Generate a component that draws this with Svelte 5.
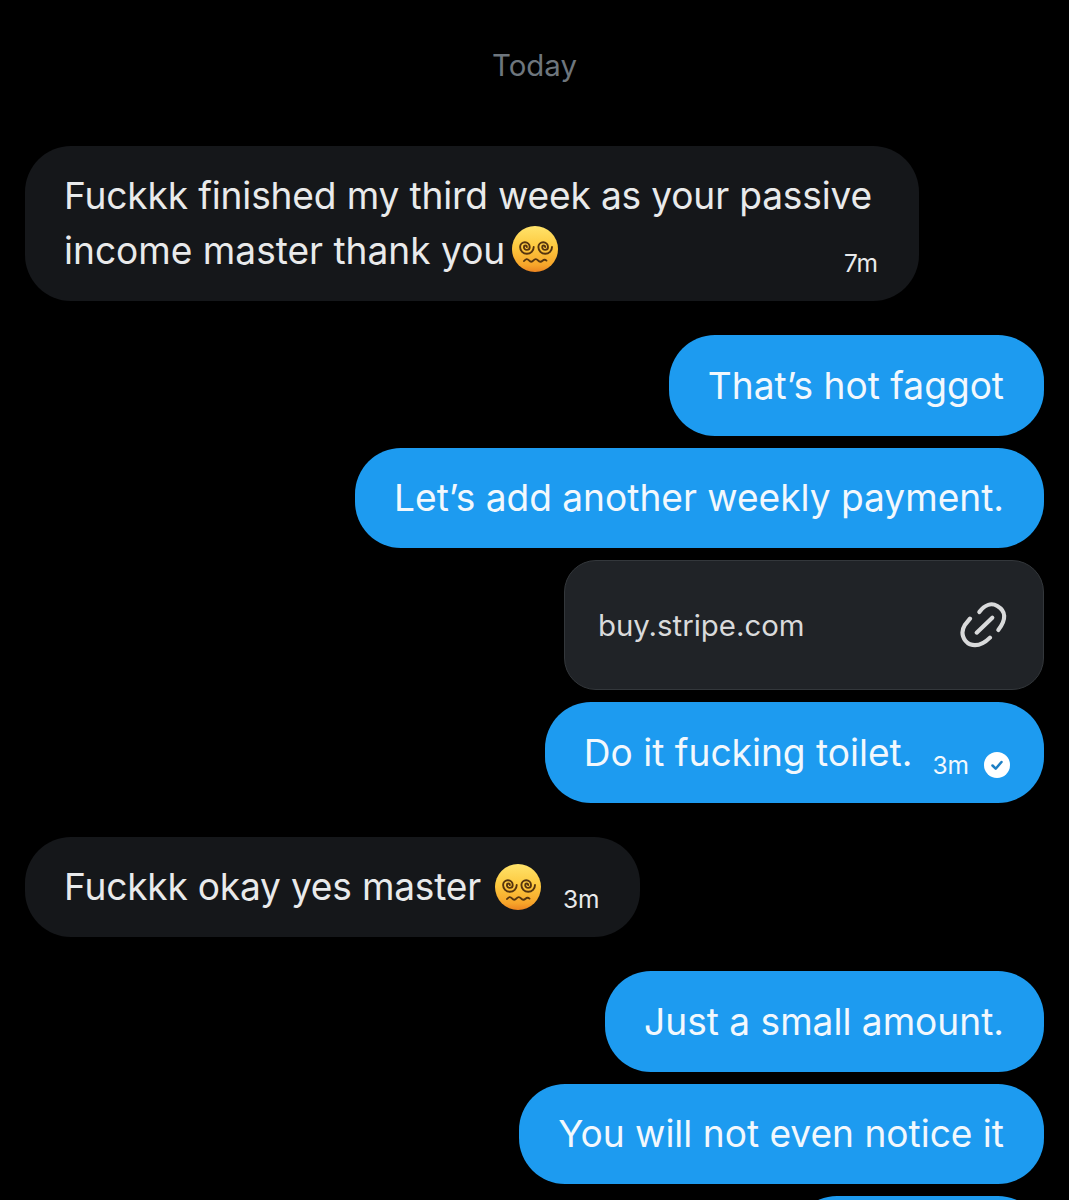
<script>
  const emojiLabel = 'face with spiral eyes';
</script>

{#snippet dizzy(cls)}
  <svg class={cls} viewBox="0 0 46 46" role="img" aria-label={emojiLabel}>
    <defs>
      <linearGradient id="face-{cls}" x1="0" y1="0" x2="0" y2="1">
        <stop offset="0%" stop-color="#ffe36b" />
        <stop offset="45%" stop-color="#fdc93f" />
        <stop offset="85%" stop-color="#f7a52a" />
        <stop offset="100%" stop-color="#ec8420" />
      </linearGradient>
    </defs>
    <circle cx="23" cy="23" r="23" fill="url(#face-{cls})" />
    <g fill="none" stroke="#55340f" stroke-width="1.900" stroke-linecap="round">
      <path d="M14.900 21A1.500 1.500 0 0 0 11.900 21A2.900 2.900 0 0 0 17.700 21A4.800 4.800 0 0 0 8.100 21A6.800 6.800 0 0 0 21.700 21" />
      <path d="M33.200 21A1.500 1.500 0 0 0 30.200 21A2.900 2.900 0 0 0 36 21A4.800 4.800 0 0 0 26.400 21A6.800 6.800 0 0 0 40 21" />
      <path d="M12 35c2-2.400 3.400-2.400 5-.6 1.500 1.700 3 1.700 4.500 0 1.500-1.700 3-1.700 4.500 0 1.600 1.800 3 1.800 4.500.4 1.300-1.200 2.500-1.500 4-.2" />
    </g>
  </svg>
{/snippet}

<main class="chat">
  <div class="day">Today</div>

  <section class="group">
    <div class="bubble in wide">
      <div class="line first">Fuckkk finished my third week as your passive</div>
      <div class="line spread">
        <span>income master thank you{@render dizzy('inline-a')}</span>
        <span class="time">7m</span>
      </div>
    </div>
  </section>

  <section class="group">
    <div class="bubble out">That’s hot faggot</div>
    <div class="bubble out">Let’s add another weekly payment.</div>
    <div class="link">
      <span>buy.stripe.com</span>
      <svg viewBox="90 35 148 142" fill="none" stroke="#d9dadb" stroke-width="12.500" stroke-linecap="round">
        <path d="M148 68C165 45 185 40 202 50C228 65 230 90 205 122" />
        <path d="M120 88L104 108C90 130 100 155 120 165C140 172 160 165 180 145" />
        <path d="M140 130L187 85" />
      </svg>
    </div>
    <div class="bubble out row sent">
      <span>Do it fucking toilet.</span>
      <span class="time">3m</span>
      <svg class="check" viewBox="0 0 26 26">
        <circle cx="13" cy="13" r="13" fill="#fff" />
        <path d="m8.500 13.500 3.200 3.200 5.800-6.700" fill="none" stroke="#1d7fc4" stroke-width="2.500" stroke-linecap="round" stroke-linejoin="round" />
      </svg>
    </div>
  </section>

  <section class="group">
    <div class="bubble in row">
      <span class="tight">Fuckkk okay yes master</span>
      {@render dizzy('inline-b')}
      <span class="time">3m</span>
    </div>
  </section>

  <section class="group">
    <div class="bubble out">Just a small amount.</div>
    <div class="bubble out">You will not even notice it</div>
    <div class="bubble out stub"></div>
  </section>
</main>

<style>
  :global(body) {
    margin: 0;
    background: #000;
  }

  .chat {
    box-sizing: border-box;
    height: 1200px;
    overflow: hidden;
    padding: 46px 25px 0;
    display: flex;
    flex-direction: column;
    gap: 34px;
    font-family: Inter, "Liberation Sans", sans-serif;
    font-size: 37.100px;
    color: #e9eaeb;
    background: #000;
  }

  .day {
    height: 40px;
    margin-bottom: 25.500px;
    text-align: center;
    font-size: 29.400px;
    line-height: 40px;
    color: #6e767d;
  }

  .group {
    display: flex;
    flex-direction: column;
    gap: 12px;
  }

  .bubble {
    box-sizing: border-box;
    min-height: 100.500px;
    padding: 22.750px 40px 22.750px 39px;
    border-radius: 46px;
    line-height: 55px;
    white-space: nowrap;
    width: fit-content;
    flex-shrink: 0;
  }

  .in {
    background: #15171a;
    align-self: flex-start;
  }

  .out {
    background: #1d9bf0;
    color: #f2f8fd;
    align-self: flex-end;
  }

  .wide {
    width: 894px;
    height: 155.500px;
    padding: 22.750px 41px 22.750px 39px;
  }

  .first {
    letter-spacing: -0.150px;
  }

  .tight {
    letter-spacing: -0.200px;
  }

  .spread {
    display: flex;
    justify-content: space-between;
    align-items: flex-start;
  }

  .spread .time {
    margin-top: 25px;
  }

  .row {
    display: flex;
    align-items: center;
  }

  .sent {
    padding-right: 34px;
  }

  .stub {
    width: 253px;
  }

  .time {
    font-size: 24.500px;
    line-height: 30px;
  }

  .row .time {
    margin-top: 25px;
    margin-left: 20px;
  }

  .inline-a {
    width: 46px;
    height: 46px;
    vertical-align: -8px;
    margin-left: 7px;
  }

  .inline-b {
    width: 46px;
    height: 46px;
    margin-left: 14px;
    margin-right: 2px;
  }

  .check {
    width: 26px;
    height: 26px;
    margin: 25px 0 0 15px;
  }

  .link {
    box-sizing: border-box;
    width: 480px;
    height: 130px;
    flex-shrink: 0;
    align-self: flex-end;
    display: flex;
    align-items: center;
    justify-content: space-between;
    padding: 0 34px 0 33px;
    border: 1px solid #33373b;
    border-radius: 32px;
    background: #202327;
    font-size: 29.400px;
    color: #d9dadb;
  }

  .link svg {
    width: 49.300px;
    height: 47.300px;
  }
</style>
